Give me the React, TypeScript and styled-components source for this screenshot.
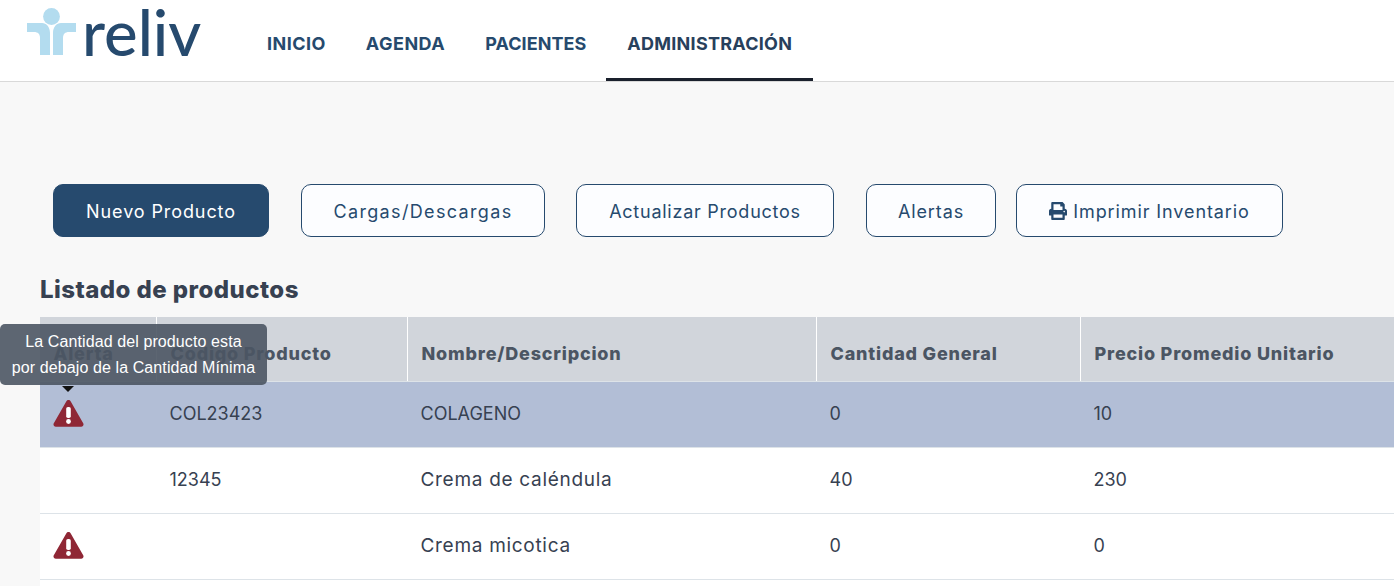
import React from "react";
import styled, { createGlobalStyle } from "styled-components";
import { FaPrint } from "react-icons/fa";

const Global = createGlobalStyle`
  html, body { margin: 0; padding: 0; height: 100%; overflow: hidden; background: #f8f8f8; }
  body { font-family: "Inter", "Liberation Sans", sans-serif; color: #374151; }
`;

const Page = styled.div`
  width: 1394px;
  height: 586px;
  overflow: hidden;
  position: relative;
`;

const Header = styled.header`
  height: 82px;
  box-sizing: border-box;
  background: #fff;
  border-bottom: 1px solid #d9d9d9;
  display: flex;
  align-items: flex-start;
  padding-left: 27px;
`;

const LogoBox = styled.div`
  width: 173px;
  height: 60px;
  margin-top: 8px;
  display: flex;
  align-items: flex-start;
`;

const LogoWord = styled.span`
  font-family: "Lato", sans-serif;
  font-size: 63.5px;
  line-height: 60px;
  font-weight: 500;
  color: #264a6e;
  margin-left: 6px;
  margin-top: -6px;
`;

const Nav = styled.nav`
  display: flex;
  margin-left: 47px;
  height: 81px;
`;

const NavItem = styled.div<{ $track: number; $active?: boolean }>`
  height: 81px;
  box-sizing: border-box;
  padding: 33px 20px 0;
  font-size: 18px;
  line-height: 22px;
  font-weight: 700;
  letter-spacing: ${(p) => p.$track}px;
  color: #264a6e;
  ${(p) => p.$active && "border-bottom: 3px solid #1a202c; color: #27405c; padding: 33px 21px 0;"}
`;

const Main = styled.main`
  padding: 102px 0 0 40px;
`;

const Toolbar = styled.div`
  display: flex;
  margin-left: 13px;
`;

const Btn = styled.button<{ $w: number; $gap: number; $track?: number; $primary?: boolean }>`
  width: ${(p) => p.$w}px;
  margin-right: ${(p) => p.$gap}px;
  height: 53px;
  box-sizing: border-box;
  border-radius: 10px;
  border: 1px solid #264a6e;
  background: ${(p) => (p.$primary ? "#264a6e" : "#fcfdff")};
  color: ${(p) => (p.$primary ? "#fff" : "#264a6e")};
  font-family: "Inter", sans-serif;
  font-size: 18px;
  letter-spacing: ${(p) => p.$track ?? 0.9}px;
  display: flex;
  align-items: center;
  justify-content: center;
  gap: 6px;
  padding: 1px 0 0;
`;

const Title = styled.h2`
  margin: 36px 0 0;
  font-size: 24px;
  line-height: 34px;
  font-weight: 800;
  letter-spacing: 0.45px;
  color: #374151;
`;

const Table = styled.div`
  margin-top: 10px;
  width: 1354px;
`;

const Row = styled.div<{ $bg: string; $h: number }>`
  display: grid;
  grid-template-columns: 117px 251px 409px 264px 1fr;
  height: ${(p) => p.$h}px;
  background: ${(p) => p.$bg};
  box-sizing: border-box;
  border-bottom: 1px solid #dde3e8;
`;

const HeadCell = styled.div`
  padding-left: 13.5px;
  padding-top: 8px;
  display: flex;
  align-items: center;
  font-size: 18px;
  font-weight: 800;
  letter-spacing: 0.8px;
  color: #4b5563;
  border-right: 1px solid #fff;
  &:last-child { border-right: 0; }
`;

const Cell = styled.div<{ $wide?: boolean }>`
  padding: 0 0 2px 12.5px;
  display: flex;
  align-items: center;
  font-size: ${(p) => (p.$wide ? 19 : 18)}px;
  letter-spacing: ${(p) => (p.$wide ? 0.7 : 0)}px;
  color: #374151;
`;

const Tip = styled.div`
  position: absolute;
  left: 0;
  top: 324px;
  width: 267px;
  height: 61px;
  box-sizing: border-box;
  background: rgba(75, 85, 99, 0.9);
  border-radius: 5px;
  color: #fff;
  font-family: "Liberation Sans", Arial, sans-serif;
  font-size: 16px;
  letter-spacing: 0.1px;
  line-height: 26px;
  padding-top: 5px;
  text-align: center;
  &::after {
    content: "";
    position: absolute;
    left: 62px;
    top: 62px;
    border-left: 6.5px solid transparent;
    border-right: 6.5px solid transparent;
    border-top: 6px solid #111;
  }
`;

const LogoSvg = styled.svg`
  flex: none;
`;

const Logo = () => (
  <LogoSvg width="49" height="47" viewBox="0 0 49 47">
    <path d="M0 15H15C19.500 15 23 19 23 25V47H13V30C13 26 11 24 7 24H0Z" fill="#b3dcef" />
    <path d="M49 15H34C29.500 15 26 19 26 25V47H36V30C36 26 38 24 42 24H49Z" fill="#b3dcef" />
    <circle cx="24.500" cy="8.500" r="9.300" fill="#fff" />
    <circle cx="24.500" cy="8.500" r="8.400" fill="#b3dcef" />
  </LogoSvg>
);

const WarningSvg = styled.svg`
  margin-left: 0.5px;
`;

const Warning = () => (
  <WarningSvg width="31" height="27" viewBox="0 0 31 27">
    <path d="M15.500 0c.9 0 1.700.5 2.100 1.200l12.600 22.100c.9 1.500-.2 3.400-2 3.400H2.800c-1.800 0-2.900-1.900-2-3.400L13.400 1.200c.4-.7 1.200-1.200 2.100-1.200z" fill="#8f2735" />
    <rect x="13.200" y="7" width="4.600" height="11" rx="1.800" fill="#fff" />
    <circle cx="15.500" cy="21.500" r="2.400" fill="#fff" />
  </WarningSvg>
);

const rows = [
  { bg: "#b2bed6", alert: true, code: "COL23423", name: "COLAGENO", wide: false, qty: "0", price: "10" },
  { bg: "#fff", alert: false, code: "12345", name: "Crema de caléndula", wide: true, qty: "40", price: "230" },
  { bg: "#fff", alert: true, code: "", name: "Crema micotica", wide: true, qty: "0", price: "0" },
];

export default function App() {
  return (
    <Page>
      <Global />
      <Header>
        <LogoBox>
          <Logo />
          <LogoWord>reliv</LogoWord>
        </LogoBox>
        <Nav>
          <NavItem $track={0.45}>INICIO</NavItem>
          <NavItem $track={0.5}>AGENDA</NavItem>
          <NavItem $track={0.05}>PACIENTES</NavItem>
          <NavItem $track={0.25} $active>ADMINISTRACIÓN</NavItem>
        </Nav>
      </Header>
      <Main>
        <Toolbar>
          <Btn $w={216} $gap={32} $primary>Nuevo Producto</Btn>
          <Btn $w={244} $gap={31} $track={1.35}>Cargas/Descargas</Btn>
          <Btn $w={258} $gap={32} $track={0.75}>Actualizar Productos</Btn>
          <Btn $w={130} $gap={20}>Alertas</Btn>
          <Btn $w={267} $gap={0}><FaPrint size={18} />Imprimir Inventario</Btn>
        </Toolbar>
        <Title>Listado de productos</Title>
        <Table>
          <Row $bg="#d1d5db" $h={65}>
            <HeadCell>Alerta</HeadCell>
            <HeadCell>Codigo Producto</HeadCell>
            <HeadCell>Nombre/Descripcion</HeadCell>
            <HeadCell>Cantidad General</HeadCell>
            <HeadCell>Precio Promedio Unitario</HeadCell>
          </Row>
          {rows.map((r) => (
            <Row key={r.name} $bg={r.bg} $h={66}>
              <Cell>{r.alert && <Warning />}</Cell>
              <Cell>{r.code}</Cell>
              <Cell $wide={r.wide}>{r.name}</Cell>
              <Cell>{r.qty}</Cell>
              <Cell>{r.price}</Cell>
            </Row>
          ))}
          <Row $bg="#fff" $h={66} />
        </Table>
      </Main>
      <Tip>
        La Cantidad del producto esta
        <br />
        por debajo de la Cantidad Mínima
      </Tip>
    </Page>
  );
}
